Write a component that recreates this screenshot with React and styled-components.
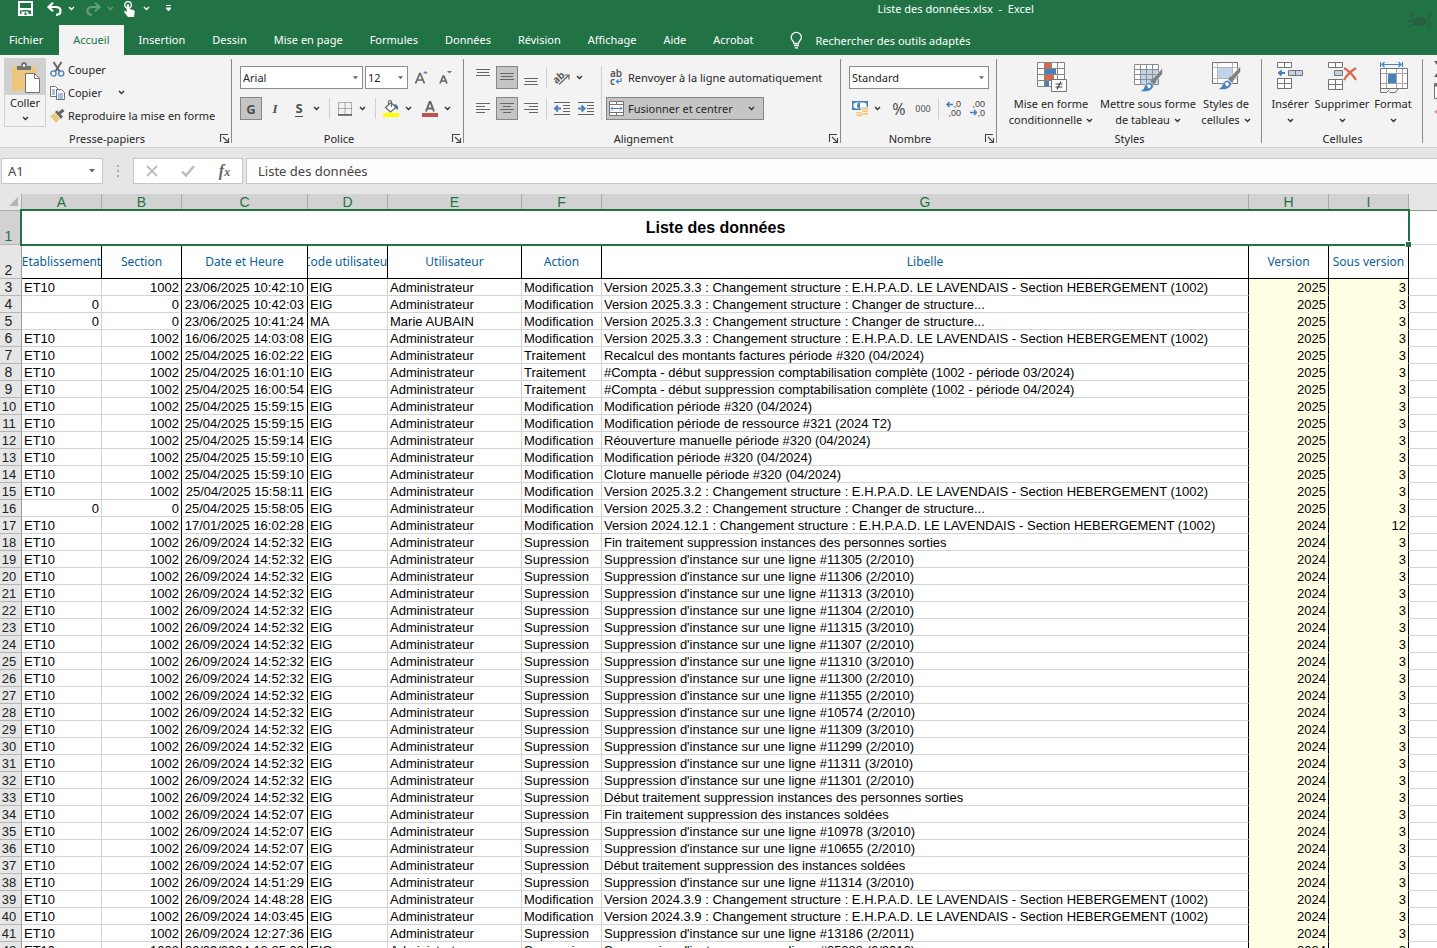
import React from "react";
import styled, { createGlobalStyle, css } from "styled-components";

const ui = '"Noto Sans", "Open Sans", sans-serif';
const sheetFont = '"Liberation Sans", Arial, sans-serif';
const green = "#217346";
const grey = "#737373";
const blue = "#4a80b8";

const GlobalStyle = createGlobalStyle`
  *, *::before, *::after { box-sizing: border-box; }
  body { margin: 0; background: #fff; font-family: ${ui}; font-size: 11px; color: #262626; }
  button, input, select { font: inherit; color: inherit; margin: 0; padding: 0; border: 0; background: none; border-radius: 0; }
  svg { display: block; flex: none; overflow: visible; }
`;

const Window = styled.div`
  display: flex;
  flex-direction: column;
  height: 100vh;
  overflow: hidden;
`;

/* ---------- title bar and tabs ---------- */

const Header = styled.header`
  position: relative;
  background: ${green};
  color: #fff;
`;
const TitleBar = styled.div`
  display: flex;
  height: 25px;
  padding-bottom: 8px;
`;
const QuickAccess = styled.div`
  display: flex;
  align-items: center;
  flex: 0 0 33%;
  padding-left: 17px;
`;
const QuickButton = styled.button`
  display: flex;
  align-items: center;
  justify-content: center;
  width: ${(p) => p.$w}px;
  height: 16px;
  margin-right: ${(p) => p.$gap || 0}px;
  opacity: ${(p) => (p.disabled ? 0.3 : 1)};
`;
const Title = styled.div`
  flex: 1;
  text-align: center;
  line-height: 18px;
  white-space: pre;
`;
const Mascot = styled.div`
  position: absolute;
  top: 10px;
  right: 4px;
`;
const Tabs = styled.nav`
  display: flex;
  height: 30px;
  gap: 3px;
`;
const Tab = styled.button`
  padding: 0 12px 1px;
  white-space: nowrap;
  ${(p) => p.$first && css`padding: 0 13px 1px 9px;`}
  ${(p) => p.$active && css`padding: 0 14px 1px; background: #f3f3f3; color: ${green};`}
`;
const Search = styled.button`
  display: flex;
  align-items: center;
  gap: 12px;
  padding: 0 22px;
`;

/* ---------- ribbon ---------- */

const RibbonBar = styled.div`
  display: flex;
  flex: none;
  height: 93px;
  overflow: hidden;
  background: #f3f3f3;
  border-bottom: 1px solid #d2d2d2;
`;
const GroupBox = styled.section`
  display: flex;
  flex-direction: column;
  flex: none;
  position: relative;
  width: ${(p) => p.$w}px;
  padding-top: 3px;
  &::after {
    content: "";
    position: absolute;
    right: 0;
    top: 4px;
    bottom: 4px;
    width: 1px;
    background: #8a8a8a;
  }
`;
const GroupBody = styled.div`
  display: flex;
  flex: 1;
  padding-left: ${(p) => p.$pad}px;
`;
const GroupFoot = styled.div`
  display: flex;
  align-items: center;
  height: 18px;
  padding: 0 3px 0 24px;
`;
const GroupName = styled.span`
  flex: 1;
  text-align: center;
  padding-right: ${(p) => (p.$wide ? 21 : 30)}px;
`;
const Rows = styled.div`
  display: flex;
  flex-direction: column;
  gap: 8px;
  padding-top: 8px;
`;
const Row = styled.div`
  display: flex;
  align-items: center;
  height: 23px;
  gap: ${(p) => p.$gap ?? 2}px;
`;
const BigRow = styled.div`
  display: flex;
  align-items: flex-start;
  gap: ${(p) => p.$gap}px;
`;
const Tool = styled.button`
  display: flex;
  align-items: center;
  justify-content: center;
  width: 22px;
  height: 23px;
  ${(p) => p.$active && css`background: #c5c5c5; border: 1px solid #868686;`}
`;
const ChevronButton = styled.button`
  display: flex;
  align-items: center;
  justify-content: center;
  width: 12px;
  height: 23px;
`;
const Split = styled.div`
  display: flex;
  margin-right: 3px;
`;
const Divider = styled.span`
  width: 1px;
  height: 21px;
  margin: 0 2px;
  background: #d0d0d0;
`;
const TallDivider = styled.span`
  width: 1px;
  height: 54px;
  margin: 8px 4px 0;
  background: #d0d0d0;
`;
const Letter = styled.span`
  color: #505050;
  font-size: 13px;
  font-weight: 700;
  line-height: 16px;
  font-style: ${(p) => (p.$italic ? "italic" : "normal")};
  font-family: ${(p) => (p.$italic ? '"Liberation Serif", serif' : ui)};
  border-bottom: ${(p) => (p.$line ? "1px solid #505050" : "0")};
`;
const SelectBox = styled.label`
  position: relative;
  display: block;
  width: ${(p) => p.$w}px;
  height: 23px;
  background: #fff;
  border: 1px solid #8c8c8c;
  select { appearance: none; width: 100%; height: 21px; padding-left: 2px; outline: 0; }
  svg { position: absolute; right: 4px; top: 9px; pointer-events: none; }
`;
const PasteButton = styled.button`
  display: flex;
  flex-direction: column;
  align-items: center;
  width: 42px;
  height: 69px;
  border: 1px solid #d0d0d0;
  line-height: 16px;
  > svg { margin-top: 5px; }
`;
const PasteTop = styled.span`
  display: flex;
  justify-content: center;
  width: 100%;
  height: 36px;
  padding-top: 3px;
  background: #d0d0d0;
`;
const ClipList = styled.div`
  display: flex;
  flex-direction: column;
  padding-left: 4px;
`;
const ClipButton = styled.button`
  display: flex;
  align-items: center;
  gap: 3px;
  height: 23px;
  white-space: nowrap;
`;
const Wide = styled.button`
  display: flex;
  align-items: center;
  gap: 4px;
  width: ${(p) => p.$w}px;
  height: 23px;
  padding-left: 3px;
  white-space: nowrap;
  ${(p) => p.$active && css`
    background: #c5c5c5;
    border: 1px solid #868686;
    padding: 0 8px 0 2px;
    span { flex: 1; text-align: left; }
  `}
`;
const BigButton = styled.button`
  display: flex;
  flex-direction: column;
  align-items: center;
  width: ${(p) => p.$w}px;
  padding-top: 4px;
  line-height: 16px;
  white-space: nowrap;
`;
const BigIcon = styled.span`
  display: flex;
  justify-content: center;
  height: 34px;
`;
const BigLine = styled.span`
  display: flex;
  align-items: center;
  justify-content: center;
  gap: 4px;
  height: 16px;
`;
const EditGroup = styled.div`
  display: flex;
  flex-direction: column;
  gap: 6px;
  padding: 6px 0 0 11px;
`;

/* ---------- formula bar ---------- */

const FormulaBar = styled.div`
  display: flex;
  flex: none;
  height: 46px;
  padding: 10px 0 10px 1px;
  background: #e6e6e6;
  font-size: 13px;
  color: #444;
`;
const NameBox = styled.label`
  display: flex;
  align-items: center;
  width: 102px;
  padding: 0 6px;
  background: #fff;
  border: 1px solid #c6c6c6;
  input { width: 100%; min-width: 0; outline: 0; }
`;
const Grip = styled.span`
  display: flex;
  align-items: center;
  justify-content: center;
  width: 30px;
`;
const EntryTools = styled.div`
  display: flex;
  align-items: center;
  justify-content: space-around;
  width: 110px;
  margin-right: 3px;
  background: #fff;
  border: 1px solid #c6c6c6;
`;
const FormulaInput = styled.input`
  && {
    flex: 1;
    min-width: 0;
    padding-left: 11px;
    background: #fdfdfd;
    border: 1px solid #c6c6c6;
    border-right: 0;
    outline: 0;
  }
`;

/* ---------- sheet ---------- */

const SheetArea = styled.main`
  flex: 1;
  min-height: 0;
  overflow: hidden;
`;
const Sheet = styled.table`
  width: 100%;
  table-layout: fixed;
  border-collapse: separate;
  border-spacing: 0;
  font-family: ${sheetFont};
  font-size: 13px;
  line-height: 16px;
  color: #000;
  th, td { padding: 0; white-space: nowrap; font-weight: 400; }
`;
const ColHead = styled.th`
  height: 17px;
  background: #d2d2d2;
  color: ${green};
  font-size: 14px;
  line-height: 14px;
  vertical-align: top;
  border-right: 1px solid #ababab;
  && { padding-top: 1px; }
`;
const Corner = styled.th`
  background: #e6e6e6;
  border-right: 1px solid #ababab;
  border-bottom: 1px solid #ababab;
  svg { margin-left: 9px; }
`;
const HeadRest = styled.th`
  background: #e6e6e6;
  border-bottom: 1px solid #9b9b9b;
`;
const RowHead = styled.th`
  height: ${(p) => (p.$tall ? 34 : 17)}px;
  vertical-align: bottom;
  text-align: center;
  background: ${(p) => (p.$selected ? "#d2d2d2" : "#e6e6e6")};
  color: ${(p) => (p.$selected ? green : "#222")};
  font-size: ${(p) => (p.$two ? 13 : 14)}px;
  line-height: ${(p) => (p.$two ? 14 : 16)}px;
  border-right: 1px solid #9b9b9b;
  border-bottom: 1px solid #b5b5b5;
  && { padding-right: 4px; }
  ${(p) => p.$two && css`&& { padding: 2px 3px 0 0; }`}
`;
const TitleCell = styled.td`
  position: relative;
  text-align: center;
  font-size: 16px;
  font-weight: 700 !important;
  &::after {
    content: "";
    position: absolute;
    inset: -2px -1px -1px -2px;
    border: 2px solid ${green};
  }
`;
const FillHandle = styled.span`
  position: absolute;
  right: -2px;
  bottom: -2px;
  z-index: 1;
  width: 6px;
  height: 6px;
  background: ${green};
  border-top: 1px solid #fff;
  border-left: 1px solid #fff;
`;
const FieldCell = styled.th`
  color: #0a6196;
  font-family: ${ui};
  font-size: 12px;
  border-right: 1px solid #000;
  border-bottom: 1px solid #000;
`;
const FieldText = styled.div`
  display: flex;
  justify-content: center;
  overflow: hidden;
`;
const Cell = styled.td`
  overflow: hidden;
  border-right: 1px solid ${(p) => (p.$edge ? "#000" : "#d4d4d4")};
  border-bottom: 1px solid ${(p) => (p.$fill ? "#ffffe5" : "#d4d4d4")};
  background: ${(p) => (p.$fill ? "#ffffe5" : "#fff")};
  text-align: ${(p) => (p.$right ? "right" : "left")};
  line-height: 14px;
  && { padding: ${(p) => (p.$date ? "2px 3px 0 2px" : "2px 2px 0")}; }
`;
const Rest = styled.td`
  border-bottom: 1px solid #d4d4d4;
`;

/* ---------- icons ---------- */

const Chevron = ({ color = "#333" }) => (
  <svg width="7" height="5" viewBox="0 0 7 5"><path d="M1 1l2.500 2.500L6 1" fill="none" stroke={color} strokeWidth="1.400" /></svg>
);
const Arrow = ({ w = 5 }) => (
  <svg width={w} height="4" viewBox="0 0 6 4"><path d="M0 0h6L3 3.500z" fill="#666" /></svg>
);
const SaveIcon = () => (
  <svg width="15" height="15" viewBox="0 0 15 15"><path d="M1 1h13v13H1z" fill="none" stroke="#fff" strokeWidth="2" /><path d="M1 7h13v2.500H1z" fill="#fff" /><path d="M3.500 14v-3.500h7V14z" fill="#fff" /><path d="M6.500 11.500h2V14h-2z" fill={green} /><path d="M4 9.500h7v2" fill="none" stroke={green} strokeWidth=".8" /></svg>
);
const UndoIcon = ({ flip }) => (
  <svg width="15" height="14" viewBox="0 0 15 14"><g transform={flip ? "translate(15 0) scale(-1 1)" : undefined}><path d="M6 .7L1.500 5 6 9.300M2 5h6.500c3 0 5 1.600 5 4s-2 3.800-4.500 3.800" fill="none" stroke="#fff" strokeWidth="2.200" /></g></svg>
);
const TouchIcon = () => (
  <svg width="13" height="16" viewBox="0 0 13 16"><circle cx="5" cy="4" r="3.300" fill="none" stroke="#fff" strokeWidth="1.300" /><path d="M3.700 4q1.300-1.500 2.600 0v4l4.200 1q1.500.5 1.200 2l-.7 5H5L1 11q0-1.500 1.500-1l1.200 1z" fill="#fff" /></svg>
);
const CustomIcon = () => (
  <svg width="7" height="7" viewBox="0 0 7 7"><path d="M1 .5h5M1 3h5L3.500 6z" fill="#fff" stroke="#fff" strokeWidth="1" /></svg>
);
const BulbIcon = () => (
  <svg width="13" height="17" viewBox="0 0 13 17"><path d="M4 11.500C4 9 1.200 8.500 1.200 5.500a5 5 0 0 1 10.200 0c0 3-2.900 3.500-2.900 6zM4 13.500h5M4.800 15.800h3.200" fill="none" stroke="#fff" strokeWidth="1.300" /></svg>
);
const CrabIcon = () => (
  <svg width="26" height="22" viewBox="0 0 26 22" fill="none" stroke="#2a5f43" strokeWidth="1.300">
    <ellipse cx="13" cy="11.500" rx="5.500" ry="4" fill="#2a5f43" />
    <path d="M8 10L4 7l1-4 2 2M4 7L2 3M18 10l4-2 3-5M22 8l-1-5M8 12l-6-1-2 2M9 14l-5 1-2 3M17 13l5 2v4M18 11l5 1 2 4M11 8l-1-3M15 8l1-3" />
  </svg>
);
const LaunchIcon = () => (
  <svg width="9" height="9" viewBox="0 0 9 9"><path d="M.5 8V.5H8M3 3l5 5M8.500 4v4.500H4" fill="none" stroke="#444" strokeWidth="1.100" /></svg>
);
const PasteIcon = () => (
  <svg width="29" height="31" viewBox="0 0 29 31">
    <path d="M1 4h24v25H1z" fill="#eec77f" /><path d="M6 8V4h4q0-4 3-4t3 4h4v4z" fill="#737373" /><circle cx="13" cy="3.500" r="1.300" fill="#fff" />
    <path d="M14.500 11.500h9l5 5v14h-14z" fill="#fff" stroke="#737373" /><path d="M23.500 11.500v5h5" fill="none" stroke="#737373" />
  </svg>
);
const CutIcon = () => (
  <svg width="15" height="15" viewBox="0 0 15 15" fill="none"><path d="M3.500 0l6.500 10M11.500 0L5 10" stroke="#666" strokeWidth="2" /><circle cx="3.500" cy="11.500" r="2.600" stroke={blue} strokeWidth="1.300" /><circle cx="11.200" cy="11.500" r="2.600" stroke={blue} strokeWidth="1.300" /></svg>
);
const CopyIcon = () => (
  <svg width="15" height="14" viewBox="0 0 15 14"><path d="M.5.5h5l2 2v8h-7z" fill="#fff" stroke={grey} /><path d="M2 4h3M2 6h3M2 8h3" stroke={blue} /><path d="M6.500 3.500h5l3 3v7h-8z" fill="#fff" stroke={grey} /><path d="M8 8h5M8 10h5M8 12h5" stroke={blue} /></svg>
);
const BrushIcon = () => (
  <svg width="15" height="14" viewBox="0 0 15 14"><path d="M0 7l5-3 5 6-4 4z" fill="#eec77f" /><path d="M5 3l2-1.500 6 6L11 10z" fill="#666" /><path d="M9 4.500L13.500 1" stroke="#666" strokeWidth="3" /></svg>
);
const GrowIcon = ({ small }) => (
  <svg width="14" height="16" viewBox="0 0 14 16">
    <path d={small ? "M2 13.500L5.200 6h.6L9 13.500M3.500 11h4" : "M1.500 13.500L5.700 3.500h.6l4.200 10M3 10h6"} fill="none" stroke="#666" strokeWidth="1.700" />
    <path d={small ? "M9 1h5l-2.500 2.500z" : "M9 3.500h5L11.500 1z"} fill={blue} />
  </svg>
);
const BordersIcon = () => (
  <svg width="14" height="14" viewBox="0 0 14 14"><path d="M.5.5h13v12H.5zM7 .5v12M.5 6.500h13" fill="none" stroke="#666" strokeDasharray="1 1" /><path d="M0 13h14" stroke="#555" strokeWidth="1.500" /></svg>
);
const FillIcon = () => (
  <svg width="17" height="17" viewBox="0 0 17 17"><path d="M11 4q5 0 4 6l-3-2z" fill={blue} /><path d="M2.500 7.500L8 2.500l5 5-5.500 4.500z" fill="#fff" stroke="#666" strokeWidth="1.200" /><path d="M5.500 5V2q0-1.500 1.500-1.500T8.500 2v5" fill="none" stroke="#666" strokeWidth="1.200" /><path d="M0 13h16v4H0z" fill="#ff0" /></svg>
);
const FontColorIcon = () => (
  <svg width="16" height="17" viewBox="0 0 16 17"><path d="M4 11.500L7.600 2h.8L12 11.500M5 8.500h6" fill="none" stroke="#666" strokeWidth="2" /><path d="M0 13h16v4H0z" fill="#c0504d" /></svg>
);
const LinesIcon = ({ lines, top = 0 }) => (
  <svg width="14" height="17" viewBox="0 0 14 17"><path d={lines.map(([x, w], i) => `M${x} ${top + 0.5 + i * 3}h${w}`).join("")} stroke="#666" /></svg>
);
const vLines = [[0, 14], [1, 12], [0, 14]];
const OrientIcon = () => (
  <svg width="18" height="16" viewBox="0 0 18 16"><text x="1" y="12" transform="rotate(-42 5 10)" fontSize="10" fontWeight="700" fill="#555">ab</text><path d="M6 14.500L16 5M11.500 5H16v4.500" fill="none" stroke="#666" strokeWidth="1.200" /></svg>
);
const IndentIcon = ({ right }) => (
  <svg width="16" height="13" viewBox="0 0 16 13"><path d="M0 .5h16M9 3.500h7M9 6.500h7M9 9.500h7M0 12.500h16" stroke="#666" /><path d={right ? "M0 6.500h5M3.500 3.500l3 3-3 3" : "M2 6.500h5M4 3.500l-3 3 3 3"} fill="none" stroke={blue} strokeWidth="2" /></svg>
);
const WrapIcon = () => (
  <svg width="15" height="17" viewBox="0 0 15 17"><g fontSize="10" fontWeight="600" fill="#555"><text x="1" y="8">ab</text><text x="1" y="16">c</text></g><path d="M12 9v3.500H8M9.500 10.500l-2 2 2 2" fill="none" stroke={blue} strokeWidth="1.200" /></svg>
);
const MergeIcon = () => (
  <svg width="15" height="15" viewBox="0 0 15 15"><path d="M.5.500h14v14H.5z" fill="#fff" stroke={grey} /><path d="M0 3.500h15M0 11.500h15M7.500 0v3.500M7.500 11.500V15" stroke={grey} /><path d="M2 7.500h11M4 5.500l-2 2 2 2M11 5.500l2 2-2 2" fill="none" stroke={blue} /></svg>
);
const CurrencyIcon = () => (
  <svg width="17" height="16" viewBox="0 0 17 16"><path d="M.75.75h14.500v7.500H.75z" fill="#fff" stroke={blue} strokeWidth="1.500" /><path d="M8 1.500a3 3 0 1 0 0 6z" fill={blue} /><path d="M1 1h3L1 3zM15 1h-3l3 2zM1 8h3L1 6z" fill={blue} /><g fill="#eec77f" stroke="#fff" strokeWidth=".6"><rect x="9" y="6" width="7.500" height="3" rx="1.400" /><rect x="9.500" y="8.700" width="7" height="3" rx="1.400" /><rect x="3.500" y="10.500" width="7" height="2.700" rx="1.300" /><rect x="9" y="11.500" width="7.500" height="2.700" rx="1.300" /><rect x="4" y="13" width="7" height="2.700" rx="1.300" /></g></svg>
);
const DecimalIcon = ({ less }) => (
  <svg width="16" height="17" viewBox="0 0 16 17"><g fontSize="9" fill="#444" textAnchor="end" fontFamily={sheetFont}><text x="15" y="7">{less ? ",00" : ",0"}</text><text x="15" y="16">{less ? ",0" : ",00"}</text></g><path d={less ? "M0 12.500h6M4 10l2.500 2.500L4 15" : "M1 4.500h6M3.500 2L1 4.500 3.500 7"} fill="none" stroke={blue} strokeWidth="1.500" /></svg>
);
const CondIcon = () => (
  <svg width="31" height="31" viewBox="0 0 31 31"><path d="M1.500.500h27v24h-27z" fill="#fff" /><path d="M8 1h7v5H8zM8 13h10v5H8z" fill="#de6648" /><path d="M8 7h12v5H8zM8 19h5v5H8z" fill={blue} /><path d="M1.500.500h27v24h-27zM1.500 6.500h27M1.500 12.500h27M1.500 18.500h27M8.500.500v24M15.500.500v6M21.500.500v24" fill="none" stroke="#858585" /><path d="M15.500 17.500h15v12h-15z" fill="#fff" stroke="#737373" /><path d="M19.500 22h7M19.500 25h7M25 19.500l-4 8" stroke="#444" strokeWidth="1.200" /></svg>
);
const BrushOver = () => (
  <g><path d="M29.500 6v6l-7 8-3-3z" fill="#808080" stroke="#f3f3f3" strokeWidth=".6" /><path d="M18.500 17.500l3.500 3.500" stroke="#808080" strokeWidth="4" /><path d="M7 29q4-1 5-6 3-4 7-2 3 3 0 6-4 4-12 2z" fill={blue} stroke="#f3f3f3" strokeWidth=".6" /><path d="M14 23q3-2 4 1-1 3-3 2z" fill="#fff" /></g>
);
const TableStyleIcon = () => (
  <svg width="31" height="31" viewBox="0 0 31 31"><path d="M1.500 2.500h24v20h-24z" fill="#fff" /><path d="M8 8h18v15H8z" fill="#c0d4ea" /><path d="M1.500 2.500h24v20h-24zM1.500 7.500h24M1.500 12.500h24M1.500 17.500h24M7.500 2.500v20M13.500 2.500v20M19.500 2.500v20" fill="none" stroke="#8c8c8c" /><BrushOver /></svg>
);
const CellStyleIcon = () => (
  <svg width="31" height="31" viewBox="0 0 31 31"><path d="M1.500.500h25v21h-25z" fill="#fff" stroke={grey} /><path d="M1.500 5.500h25M1.500 16.500h25M6.500.500v21M21.500.500v21" stroke="#b5b5b5" /><path d="M7 6h14v10H7z" fill="#c0d4ea" /><g transform="translate(0 -2)"><BrushOver /></g></svg>
);
const InsertIcon = () => (
  <svg width="28" height="31" viewBox="0 0 28 31" fill="#fff" stroke={grey}><path d="M1.500.500h14v5h-14zM8.500.500v5M1.500 16.500h14v10h-14zM1.500 21.500h14M8.500 16.500v10" /><path d="M12.500 8.500h14v5h-14zM19.500 8.500v5" fill="#c0d4ea" /><path d="M3 11h6M5.500 8.500L3 11l2.500 2.500" fill="none" stroke={blue} strokeWidth="2" /></svg>
);
const DeleteIcon = () => (
  <svg width="31" height="31" viewBox="0 0 31 31" fill="#fff" stroke={grey}><path d="M1.500.500h14v5h-14zM8.500.500v5M1.500 17.500h14v10h-14zM1.500 22.500h14M8.500 17.500v10" /><path d="M7.500 8.500h8v5h-8z" fill="#c0d4ea" /><path d="M17 6q7 4 12 12M29 6q-8 5-12 12" fill="none" stroke="#de6648" strokeWidth="2.200" /></svg>
);
const FormatIcon = () => (
  <svg width="29" height="32" viewBox="0 0 29 32"><path d="M1.500 0v5M23.500 0v5M3 2.500h19M5.500 0L3 2.500 5.500 5M19.500 0L22 2.500 19.500 5" fill="none" stroke={blue} strokeWidth="1.200" /><path d="M1.500 6.500h27v20h-27z" fill="#fff" /><path d="M1.500 11.500h27M1.500 21.500h27M7.500 6.500v20M17.500 6.500v20M23.500 6.500v20" stroke="#a5a5a5" /><path d="M1.500 6.500h27v20h-27zM1.500 26.500v4h6l3-3M10.500 30.500h6l3-4" fill="none" stroke={grey} /><path d="M9 12h8v9H9z" fill={blue} /></svg>
);
const SumIcon = () => (
  <svg width="13" height="16" viewBox="0 0 13 16"><path d="M12 1H2l5 7-5 7h10" fill="none" stroke="#555" strokeWidth="2" /></svg>
);
const FillDownIcon = () => (
  <svg width="14" height="16" viewBox="0 0 14 16"><path d="M.5.500h13v15H.5z" fill="#fff" stroke={grey} /><path d="M0 2h14" stroke={grey} strokeWidth="3" /></svg>
);
const EraserIcon = () => (
  <svg width="14" height="12" viewBox="0 0 14 12"><path d="M0 7l7-6 6 4-7 6z" fill="#e38bae" /></svg>
);
const GripIcon = () => (
  <svg width="2" height="12" viewBox="0 0 2 12"><path d="M0 0h2v2H0zM0 5h2v2H0zM0 10h2v2H0z" fill="#aaa" /></svg>
);
const CrossIcon = () => (
  <svg width="12" height="12" viewBox="0 0 12 12"><path d="M1 1l10 10M11 1L1 11" stroke="#bcbcbc" strokeWidth="1.800" /></svg>
);
const CheckIcon = () => (
  <svg width="14" height="12" viewBox="0 0 14 12"><path d="M1 6.500l4 4L13 1" fill="none" stroke="#bcbcbc" strokeWidth="2.400" /></svg>
);
const Fx = styled.span`
  font: italic 700 16px "Liberation Serif", serif;
  color: #666;
  small { font-size: 12px; }
`;
const NumSign = styled.span`
  font-size: ${(p) => p.$size}px;
  color: #505050;
`;

/* ---------- data ---------- */

const TABS = ["Fichier", "Accueil", "Insertion", "Dessin", "Mise en page", "Formules", "Données", "Révision", "Affichage", "Aide", "Acrobat"];

const COLS = [
  ["A", 80, "Etablissement"], ["B", 80, "Section"], ["C", 126, "Date et Heure"], ["D", 80, "Code utilisateur"],
  ["E", 134, "Utilisateur"], ["F", 80, "Action"], ["G", 647, "Libelle"], ["H", 80, "Version"], ["I", 80, "Sous version"],
];

const M = "Modification", T = "Traitement", S = "Supression";
const LAV = "Changement structure : E.H.P.A.D. LE LAVENDAIS - Section HEBERGEMENT (1002)";
const CH = "Changement structure : Changer de structure...";
const row = (date, action, label, version = 2024, sub = 3, est = "ET10", code = "EIG", user = "Administrateur") =>
  ({ est, section: est ? 1002 : 0, date, code, user, action, label, version, sub });
const inst = (time, ref) => row("26/09/2024 " + time, S, "Suppression d'instance sur une ligne #" + ref);
const t32 = "14:52:32", t07 = "14:52:07";

const DATA = [
  row("23/06/2025 10:42:10", M, "Version 2025.3.3 : " + LAV, 2025),
  row("23/06/2025 10:42:03", M, "Version 2025.3.3 : " + CH, 2025, 3, 0),
  row("23/06/2025 10:41:24", M, "Version 2025.3.3 : " + CH, 2025, 3, 0, "MA", "Marie AUBAIN"),
  row("16/06/2025 14:03:08", M, "Version 2025.3.3 : " + LAV, 2025),
  row("25/04/2025 16:02:22", T, "Recalcul des montants factures période #320 (04/2024)", 2025),
  row("25/04/2025 16:01:10", T, "#Compta - début suppression comptabilisation complète (1002 - période 03/2024)", 2025),
  row("25/04/2025 16:00:54", T, "#Compta - début suppression comptabilisation complète (1002 - période 04/2024)", 2025),
  row("25/04/2025 15:59:15", M, "Modification période #320 (04/2024)", 2025),
  row("25/04/2025 15:59:15", M, "Modification période de ressource #321 (2024 T2)", 2025),
  row("25/04/2025 15:59:14", M, "Réouverture manuelle période #320 (04/2024)", 2025),
  row("25/04/2025 15:59:10", M, "Modification période #320 (04/2024)", 2025),
  row("25/04/2025 15:59:10", M, "Cloture manuelle période #320 (04/2024)", 2025),
  row("25/04/2025 15:58:11", M, "Version 2025.3.2 : " + LAV, 2025),
  row("25/04/2025 15:58:05", M, "Version 2025.3.2 : " + CH, 2025, 3, 0),
  row("17/01/2025 16:02:28", M, "Version 2024.12.1 : " + LAV, 2024, 12),
  row("26/09/2024 14:52:32", S, "Fin traitement suppression instances des personnes sorties"),
  ...["11305 (2/2010)", "11306 (2/2010)", "11313 (3/2010)", "11304 (2/2010)", "11315 (3/2010)", "11307 (2/2010)", "11310 (3/2010)",
    "11300 (2/2010)", "11355 (2/2010)", "10574 (2/2010)", "11309 (3/2010)", "11299 (2/2010)", "11311 (3/2010)", "11301 (2/2010)"].map((r) => inst(t32, r)),
  row("26/09/2024 14:52:32", S, "Début traitement suppression instances des personnes sorties"),
  row("26/09/2024 14:52:07", S, "Fin traitement suppression des instances soldées"),
  inst(t07, "10978 (3/2010)"),
  inst(t07, "10655 (2/2010)"),
  row("26/09/2024 14:52:07", S, "Début traitement suppression des instances soldées"),
  inst("14:51:29", "11314 (3/2010)"),
  row("26/09/2024 14:48:28", M, "Version 2024.3.9 : " + LAV),
  row("26/09/2024 14:03:45", M, "Version 2024.3.9 : " + LAV),
  inst("12:27:36", "13186 (2/2011)"),
  inst("12:25:03", "25388 (6/2016)"),
];

/* ---------- pieces ---------- */

function Group({ name, w, pad = 8, launcher, children }) {
  return (
    <GroupBox $w={w} aria-label={name}>
      <GroupBody $pad={pad}>{children}</GroupBody>
      <GroupFoot>
        <GroupName $wide={!launcher}>{name}</GroupName>
        {launcher && <button aria-label={"Options " + name}><LaunchIcon /></button>}
      </GroupFoot>
    </GroupBox>
  );
}

function SplitTool({ label, children }) {
  return (
    <Split>
      <Tool aria-label={label}>{children}</Tool>
      <ChevronButton aria-label={"Options " + label}><Chevron /></ChevronButton>
    </Split>
  );
}

function Choice({ label, value, w }) {
  return (
    <SelectBox $w={w}>
      <select aria-label={label} defaultValue={value}><option>{value}</option></select>
      <Arrow />
    </SelectBox>
  );
}

function Big({ w, icon, first, second }) {
  return (
    <BigButton $w={w}>
      <BigIcon>{icon}</BigIcon>
      <BigLine>{first}</BigLine>
      <BigLine>{second}<Chevron /></BigLine>
    </BigButton>
  );
}

function Ribbon() {
  return (
    <RibbonBar>
      <Group name="Presse-papiers" w={232} pad={4} launcher>
        <PasteButton><PasteTop><PasteIcon /></PasteTop>Coller<Chevron /></PasteButton>
        <ClipList>
          <ClipButton><CutIcon />Couper</ClipButton>
          <Row $gap={14}><ClipButton><CopyIcon />Copier</ClipButton><ChevronButton aria-label="Options Copier"><Chevron /></ChevronButton></Row>
          <ClipButton><BrushIcon />Reproduire la mise en forme</ClipButton>
        </ClipList>
      </Group>

      <Group name="Police" w={232} launcher>
        <Rows>
          <Row>
            <Choice label="Police" value="Arial" w={123} />
            <Choice label="Taille" value="12" w={43} />
            <Tool aria-label="Agrandir"><GrowIcon /></Tool>
            <Tool aria-label="Réduire"><GrowIcon small /></Tool>
          </Row>
          <Row>
            <Tool $active><Letter>G</Letter></Tool>
            <Tool><Letter $italic>I</Letter></Tool>
            <SplitTool label="Souligné"><Letter $line>S</Letter></SplitTool>
            <Divider />
            <SplitTool label="Bordures"><BordersIcon /></SplitTool>
            <Divider />
            <SplitTool label="Remplissage"><FillIcon /></SplitTool>
            <SplitTool label="Couleur de police"><FontColorIcon /></SplitTool>
          </Row>
        </Rows>
      </Group>

      <Group name="Alignement" w={377} launcher>
        <Rows>
          <Row>
            <Tool aria-label="Haut"><LinesIcon lines={vLines} /></Tool>
            <Tool $active aria-label="Milieu"><LinesIcon lines={vLines} top={4} /></Tool>
            <Tool aria-label="Bas"><LinesIcon lines={vLines} top={9} /></Tool>
            <Divider />
            <SplitTool label="Orientation"><OrientIcon /></SplitTool>
          </Row>
          <Row>
            <Tool aria-label="Gauche"><LinesIcon lines={[[0, 14], [0, 9], [0, 14], [0, 9]]} top={3} /></Tool>
            <Tool $active aria-label="Centre"><LinesIcon lines={[[0, 14], [3, 8], [0, 14], [3, 8]]} top={3} /></Tool>
            <Tool aria-label="Droite"><LinesIcon lines={[[0, 14], [5, 9], [0, 14], [5, 9]]} top={3} /></Tool>
            <Divider />
            <Tool aria-label="Diminuer le retrait"><IndentIcon /></Tool>
            <Tool aria-label="Augmenter le retrait"><IndentIcon right /></Tool>
          </Row>
        </Rows>
        <TallDivider />
        <Rows>
          <Wide $w={230}><WrapIcon /><span>Renvoyer à la ligne automatiquement</span></Wide>
          <Wide $w={158} $active><MergeIcon /><span>Fusionner et centrer</span><Chevron /></Wide>
        </Rows>
      </Group>

      <Group name="Nombre" w={156} launcher>
        <Rows>
          <Choice label="Format de nombre" value="Standard" w={140} />
          <Row>
            <SplitTool label="Monnaie"><CurrencyIcon /></SplitTool>
            <Tool><NumSign $size={16}>%</NumSign></Tool>
            <Tool><NumSign $size={9}>000</NumSign></Tool>
            <Divider />
            <Tool aria-label="Ajouter une décimale"><DecimalIcon /></Tool>
            <Tool aria-label="Réduire les décimales"><DecimalIcon less /></Tool>
          </Row>
        </Rows>
      </Group>

      <Group name="Styles" w={265} pad={6}>
        <BigRow $gap={1}>
          <Big w={96} icon={<CondIcon />} first="Mise en forme" second="conditionnelle" />
          <Big w={96} icon={<TableStyleIcon />} first="Mettre sous forme" second="de tableau" />
          <Big w={58} icon={<CellStyleIcon />} first="Styles de" second="cellules" />
        </BigRow>
      </Group>

      <Group name="Cellules" w={161} pad={8}>
        <BigRow $gap={2}>
          <Big w={40} icon={<InsertIcon />} first="Insérer" />
          <Big w={60} icon={<DeleteIcon />} first="Supprimer" />
          <Big w={38} icon={<FormatIcon />} first="Format" />
        </BigRow>
      </Group>

      <EditGroup>
        <button aria-label="Somme"><SumIcon /></button>
        <button aria-label="Recopier"><FillDownIcon /></button>
        <button aria-label="Effacer"><EraserIcon /></button>
      </EditGroup>
    </RibbonBar>
  );
}

function DataRow({ n, r }) {
  return (
    <tr>
      <RowHead scope="row" $two={n > 9}>{n}</RowHead>
      <Cell $right={!r.est}>{r.est}</Cell>
      <Cell $right $edge>{r.section}</Cell>
      <Cell $right $edge $date>{r.date}</Cell>
      <Cell>{r.code}</Cell>
      <Cell>{r.user}</Cell>
      <Cell>{r.action}</Cell>
      <Cell $edge>{r.label}</Cell>
      <Cell $right $edge $fill>{r.version}</Cell>
      <Cell $right $edge $fill>{r.sub}</Cell>
      <Rest />
    </tr>
  );
}

export default function App() {
  return (
    <Window>
      <GlobalStyle />
      <Header>
        <TitleBar>
          <QuickAccess>
            <QuickButton $w={16} $gap={13} aria-label="Enregistrer"><SaveIcon /></QuickButton>
            <QuickButton $w={16} $gap={3} aria-label="Annuler"><UndoIcon /></QuickButton>
            <QuickButton $w={12} $gap={8} aria-label="Options Annuler"><Chevron color="#fff" /></QuickButton>
            <QuickButton $w={16} $gap={3} disabled aria-label="Rétablir"><UndoIcon flip /></QuickButton>
            <QuickButton $w={12} $gap={5} disabled aria-label="Options Rétablir"><Chevron color="#fff" /></QuickButton>
            <QuickButton $w={16} $gap={3} aria-label="Mode tactile"><TouchIcon /></QuickButton>
            <QuickButton $w={12} $gap={8} aria-label="Options Mode tactile"><Chevron color="#fff" /></QuickButton>
            <QuickButton $w={16} aria-label="Personnaliser"><CustomIcon /></QuickButton>
          </QuickAccess>
          <Title>{"Liste des données.xlsx  -  Excel"}</Title>
        </TitleBar>
        <Tabs>
          {TABS.map((t) => <Tab key={t} $first={t === "Fichier"} $active={t === "Accueil"}>{t}</Tab>)}
          <Search><BulbIcon />Rechercher des outils adaptés</Search>
        </Tabs>
        <Mascot><CrabIcon /></Mascot>
      </Header>

      <Ribbon />

      <FormulaBar>
        <NameBox><input aria-label="Zone Nom" defaultValue="A1" /><Arrow w={8} /></NameBox>
        <Grip><GripIcon /></Grip>
        <EntryTools>
          <button aria-label="Annuler la saisie"><CrossIcon /></button>
          <button aria-label="Valider"><CheckIcon /></button>
          <button aria-label="Insérer une fonction"><Fx>f<small>x</small></Fx></button>
        </EntryTools>
        <FormulaInput aria-label="Barre de formule" defaultValue="Liste des données" />
      </FormulaBar>

      <SheetArea>
        <Sheet>
          <colgroup>
            <col width="22" />
            {COLS.map(([c, w]) => <col key={c} width={w} />)}
            <col />
          </colgroup>
          <thead>
            <tr>
              <Corner aria-label="Tout sélectionner"><svg width="10" height="10" viewBox="0 0 10 10"><path d="M9 0v9H0z" fill="#b4b4b4" /></svg></Corner>
              {COLS.map(([c]) => <ColHead key={c} scope="col">{c}</ColHead>)}
              <HeadRest />
            </tr>
          </thead>
          <tbody>
            <tr>
              <RowHead scope="row" $tall $selected>1</RowHead>
              <TitleCell colSpan={9}>Liste des données<FillHandle /></TitleCell>
              <Rest />
            </tr>
            <tr>
              <RowHead scope="row" $tall>2</RowHead>
              {COLS.map(([c, , name]) => <FieldCell key={c}><FieldText>{name}</FieldText></FieldCell>)}
              <Rest />
            </tr>
            {DATA.map((r, i) => <DataRow key={i} n={i + 3} r={r} />)}
          </tbody>
        </Sheet>
      </SheetArea>
    </Window>
  );
}
